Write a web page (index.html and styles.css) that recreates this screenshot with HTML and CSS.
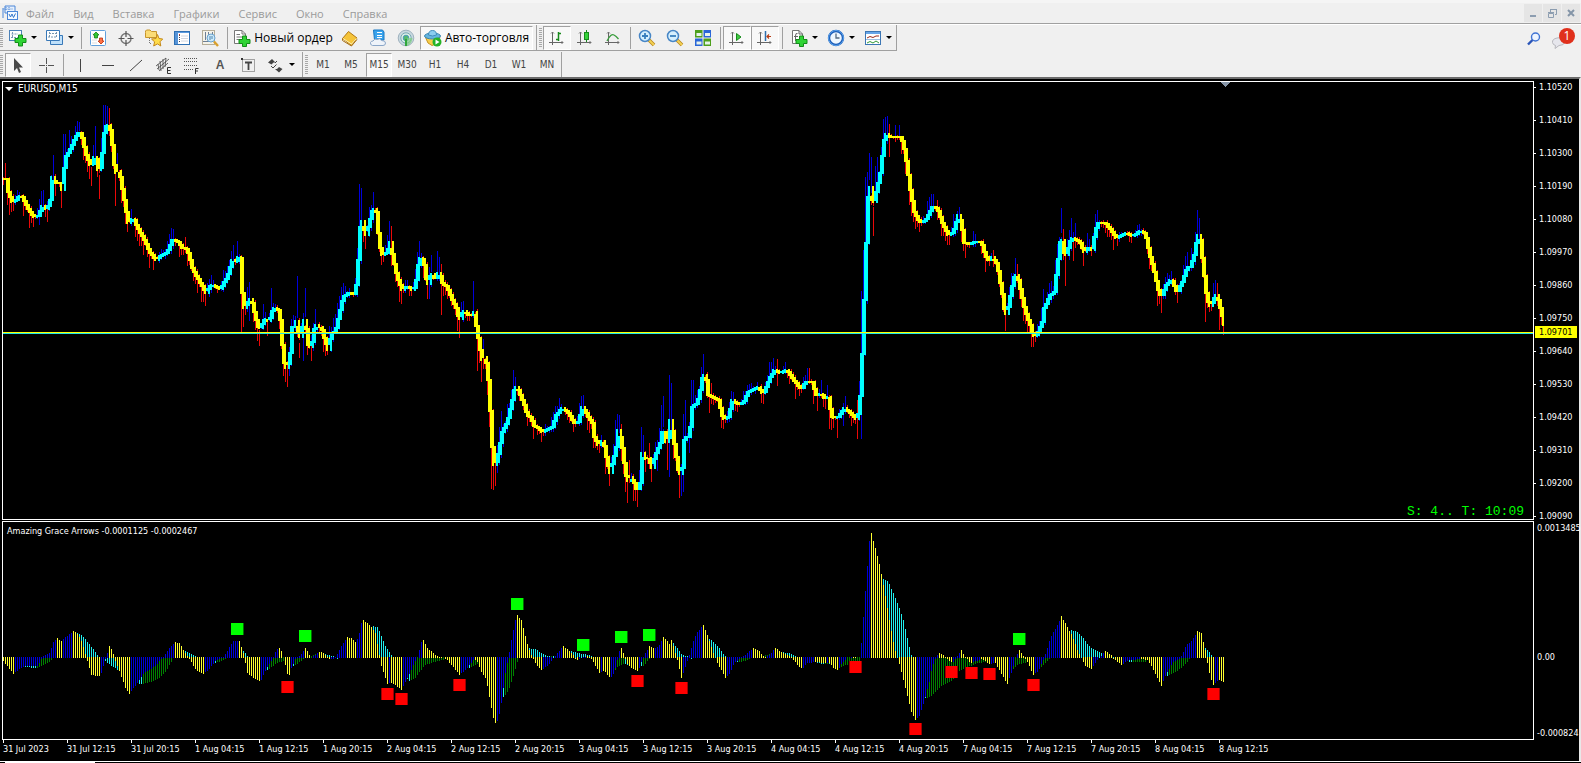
FILE: index.html
```html
<!DOCTYPE html>
<html lang="ru">
<head>
<meta charset="utf-8">
<title>EURUSD,M15</title>
<link rel="stylesheet" href="styles.css">
</head>
<body>
<header class="menubar">
  <svg class="app-icon" viewBox="0 0 16 16"><path d="M1 3V13M3 1V8H13V1Z" fill="#e8f1fc" stroke="#4a86d8"/><path d="M1.500 4H11M4 2V6M7 2V6" stroke="#4a86d8" stroke-dasharray="1 1"/><rect x="5.500" y="6.500" width="10" height="8" fill="#f4f9ff" stroke="#4a86d8"/><path d="M7 9L8.500 12L10 9L11.500 12.500L13.500 8.500" fill="none" stroke="#3377cc"/></svg>
  <nav class="menu">
    <button>Файл</button><button>Вид</button><button>Вставка</button><button>Графики</button><button>Сервис</button><button>Окно</button><button>Справка</button>
  </nav>
  <div class="window-buttons">
    <button aria-label="Свернуть"><svg viewBox="0 0 16 16"><path d="M5 11H11" stroke="#8c9db0" stroke-width="2"/></svg></button>
    <button aria-label="Восстановить"><svg viewBox="0 0 16 16"><path d="M6.500 7V4.500H12.500V9.500H11M6 4.500H13" fill="none" stroke="#8c9db0"/><path d="M4.500 8.500H9.500V12.500H4.500ZM4 7.500H10" fill="none" stroke="#8c9db0"/></svg></button>
    <button aria-label="Закрыть"><svg viewBox="0 0 16 16"><path d="M5 5L11 11M11 5L5 11" stroke="#8495a8" stroke-width="2"/></svg></button>
  </div>
</header>

<div class="toolbar toolbar-main">
  <div class="band">
    <span class="grip"></span>
    <button class="tool drop" aria-label="Новый график"><svg viewBox="0 0 18 18"><rect x=".500" y="1.500" width="12" height="10" fill="#fff" stroke="#4d82b8"/><path d="M3.500 3V9M2 8.500H10M2.500 5H9" stroke="#7a98b5" stroke-dasharray="2 1"/><path d="M9.500 6H13.500V9.500H17V13.500H13.500V17H9.500V13.500H6V9.500H9.500Z" fill="#2fd335" stroke="#128c18"/></svg></button>
    <button class="tool drop" aria-label="Профили"><svg viewBox="0 0 18 18"><path d="M4.500 6.500H16.500V15.500H4.500Z" fill="#bfe0fa" stroke="#3878b8"/><path d="M.500 1.500H13.500V11.500H.500Z" fill="#fff" stroke="#3878b8"/><path d="M3.500 3V9M2 8H11M3 4.500H11M10.500 3V8" stroke="#7796b0" stroke-dasharray="2 1"/></svg></button>
    <span class="sep"></span>
    <button class="tool" aria-label="Обзор рынка"><svg viewBox="0 0 18 18"><rect x="1.500" y="1.500" width="15" height="15" rx="1" fill="#fff" stroke="#60a0dc"/><path d="M3 5H6M3 8H6M3 11H8M3 14H8" stroke="#ddd"/><path d="M7 3L10 6H8.500V9H5.500V6H4Z" fill="#31c732" stroke="#148014" stroke-width=".800"/><path d="M12 15L9 12H10.500V9H13.500V12H15Z" fill="#ff7145" stroke="#b92e0c" stroke-width=".800"/></svg></button>
    <button class="tool" aria-label="Прицел"><svg viewBox="0 0 18 18"><circle cx="9" cy="9.500" r="5" fill="none" stroke="#777" stroke-width="1.400"/><path d="M9 2V8M9 11V17M1.500 9.500H7.500M10.500 9.500H16.500" stroke="#555" stroke-width="1.200"/></svg></button>
    <button class="tool" aria-label="Навигатор"><svg viewBox="0 0 18 18"><path d="M.500 3.500V2L1.500 1H5L6.500 2.500H11.500V8.500H.500Z" fill="#fbdc76" stroke="#c8962c"/><path d="M4.500 9V15M5 14.500H7" stroke="#777" stroke-dasharray="1 1"/><path d="M12.500 5.500L14 9.500L17.700 10L15 12.800L15.800 17L12.500 14.900L8.700 17L9.600 12.800L6.500 10L11 9.500Z" fill="#ffdc4a" stroke="#c4891b"/></svg></button>
    <button class="tool" aria-label="Терминал"><svg viewBox="0 0 18 18"><rect x="1.500" y="2.500" width="15" height="13" fill="#fff" stroke="#2e70b4"/><path d="M2 3.500H16" stroke="#5b9be0"/><rect x="2" y="3" width="3" height="12" fill="#5694d8"/><path d="M8 7H15M8 9.500H15M8 12H15" stroke="#d0d6e0"/><path d="M6.500 6V14" stroke="#445" stroke-dasharray="1 1"/><path d="M6 5.500H7" stroke="#c33"/></svg></button>
    <button class="tool" aria-label="Тестер стратегий"><svg viewBox="0 0 18 18"><rect x="1.500" y="1.500" width="12" height="14" fill="#f5f3ea" stroke="#b6ae98"/><path d="M4.500 3V11M7.500 3V6M11.500 3V6M2 12.500H8" stroke="#6f7f93"/><circle cx="10" cy="9" r="4" fill="#c6e7fb" fill-opacity=".850" stroke="#6aa2ce"/><path d="M9 7V11M11 7V10" stroke="#5085af"/><path d="M13 12.500L17 17" stroke="#d9a02c" stroke-width="2.400"/></svg></button>
    <span class="sep"></span>
    <button class="tool wide"><svg viewBox="0 0 18 18"><path d="M1.500 1.500H9L12.500 5V14.500H1.500Z" fill="#fff" stroke="#777"/><path d="M9 1.500V5H12.500M3.500 5.500H7M3.500 8H10M3.500 10.500H8" fill="none" stroke="#777"/><path d="M9.500 7H13.500V10.500H17V14.500H13.500V17.500H9.500V14.500H6V10.500H9.500Z" fill="#2fd335" stroke="#128c18"/></svg>Новый ордер</button>
    <button class="tool" aria-label="MetaEditor"><svg viewBox="0 0 18 18"><path d="M1.500 9.500L7.500 2.500L16 9L10.500 16.500Z" fill="#f5c43a" stroke="#b17812"/><path d="M2 9.500L10.500 15L15.500 9.500" fill="none" stroke="#fff2b4"/><path d="M1.500 9.500V11.500L10.500 17L16 10.500" fill="none" stroke="#a86e12"/></svg></button>
    <button class="tool" aria-label="VPS"><svg viewBox="0 0 18 18"><path d="M4.500 1H13.500L15 3V11H5.500Z" fill="#39a3ec" stroke="#1978c4"/><path d="M8 3.500H13M8 6.500H13M8 8.500H13" stroke="#fff"/><path d="M3.500 16.500Q1 16 1.500 13.500Q2 12 4 12Q5.500 9 8.500 10.500Q10.500 8.500 12.500 11.500Q16.500 11.500 16.500 14Q16.500 16.500 14 16.500Z" fill="#eef3fa" stroke="#8aa6c8"/></svg></button>
    <button class="tool" aria-label="Сигналы"><svg viewBox="0 0 18 18"><circle cx="9" cy="9" r="7.800" fill="#c9d9e0" stroke="#9fb2bf"/><circle cx="9" cy="9" r="5.200" fill="#dceee5" stroke="#78a9b5"/><circle cx="9" cy="9" r="2.800" fill="#55b96e" stroke="#4c9abb"/><path d="M8 10H10V17H8Z" fill="#30a63b"/><path d="M10 9V17Q15 15 15.500 9" fill="#7fce81" fill-opacity=".700"/></svg></button>
    <button class="tool auto pressed"><svg viewBox="0 0 18 18"><path d="M1.500 8.500L4 14L8 16.500L14 14L16 8Z" fill="#f8ce4c" stroke="#c49322"/><ellipse cx="8.500" cy="7" rx="8" ry="3" fill="#65b5e0" stroke="#3985b0"/><path d="M4.500 6Q4.500 1.500 8.500 1.500T12.500 6Q8.500 8 4.500 6Z" fill="#8bcdf0" stroke="#3f8dbc"/><circle cx="13" cy="13" r="4.500" fill="#25b327"/><path d="M11.500 10.500L15.500 13L11.500 15.500Z" fill="#fff"/></svg>Авто-торговля</button>
    <span class="sep edge"></span>
    <span class="grip"></span>
    <button class="tool pressed" aria-label="Бары"><svg viewBox="0 0 18 18"><use href="#axes"/><path d="M10.500 3V12M8 10.500H10.500M10.500 4.500H13" fill="none" stroke="#188a1c" stroke-width="1.500"/></svg></button>
    <button class="tool" aria-label="Свечи"><svg viewBox="0 0 18 18"><use href="#axes"/><path d="M10.500 1V13" stroke="#188a1c"/><rect x="8.500" y="3.500" width="4" height="7" fill="#35d33a" stroke="#188a1c"/></svg></button>
    <button class="tool" aria-label="Линия"><svg viewBox="0 0 18 18"><use href="#axes"/><path d="M3 12Q7 4 10 6Q12 7 14.500 10" fill="none" stroke="#3a9d3d" stroke-width="1.300"/></svg></button>
    <span class="sep"></span>
    <button class="tool" aria-label="Увеличить"><svg viewBox="0 0 18 18"><path d="M11 11L16 16" stroke="#b5861d" stroke-width="3.600"/><path d="M11 11L16 16" stroke="#f4d153" stroke-width="2"/><circle cx="7" cy="7" r="5.500" fill="#d5effe" stroke="#4786c6" stroke-width="1.500"/><path d="M4 7H10M7 4V10" stroke="#397fbe" stroke-width="1.800"/></svg></button>
    <button class="tool" aria-label="Уменьшить"><svg viewBox="0 0 18 18"><path d="M11 11L16 16" stroke="#b5861d" stroke-width="3.600"/><path d="M11 11L16 16" stroke="#f4d153" stroke-width="2"/><circle cx="7" cy="7" r="5.500" fill="#d5effe" stroke="#4786c6" stroke-width="1.500"/><path d="M4 7H10" stroke="#397fbe" stroke-width="1.800"/></svg></button>
    <button class="tool" aria-label="Окна мозаикой"><svg viewBox="0 0 18 18"><path d="M1 1H8.500V8.500H1ZM9.500 9.500H17V17H9.500Z" fill="#4da01c"/><path d="M9.500 1H17V8.500H9.500ZM1 9.500H8.500V17H1Z" fill="#2a66d8"/><path d="M2.500 4H7.500V7H2.500ZM11 4H16V7H11ZM2.500 12.500H7.500V15.500H2.500ZM11 12.500H16V15.500H11Z" fill="#e8f3ea"/></svg></button>
    <span class="sep"></span>
    <button class="tool pressed" aria-label="Автопрокрутка"><svg viewBox="0 0 18 18"><use href="#axes"/><path d="M8.500 4.500L13 8L8.500 11.500Z" fill="#3fcc42" stroke="#188a1c"/></svg></button>
    <button class="tool pressed" aria-label="Сдвиг графика"><svg viewBox="0 0 18 18"><use href="#axes"/><path d="M9.500 2V12" stroke="#2c6fae" stroke-width="1.500"/><path d="M15 7.500H11M13 5.500L11 7.500L13 9.500" fill="none" stroke="#b73b13" stroke-width="1.200"/></svg></button>
    <span class="sep"></span>
    <button class="tool drop" aria-label="Индикаторы"><svg viewBox="0 0 18 18"><path d="M2.500 1.500H9L12.500 5V14.500H2.500Z" fill="#fff" stroke="#777"/><path d="M9 1.500V5H12.500M7.500 4.500Q5.500 3.500 5.500 7V12M4 7.500H8" fill="none" stroke="#666"/><path d="M9.500 7H13.500V10.500H17V14.500H13.500V17.500H9.500V14.500H6V10.500H9.500Z" fill="#2fd335" stroke="#128c18"/></svg></button>
    <button class="tool drop" aria-label="Периоды"><svg viewBox="0 0 18 18"><circle cx="9" cy="9" r="7" fill="#eef7ff" stroke="#1c5db8" stroke-width="2.400"/><circle cx="9" cy="9" r="7.500" fill="none" stroke="#5da5ee"/><path d="M9 4.500V9H12.500" fill="none" stroke="#566b80" stroke-width="1.300"/></svg></button>
    <button class="tool drop" aria-label="Шаблоны"><svg viewBox="0 0 18 18"><rect x="1.500" y="2.500" width="15" height="13" fill="#fff" stroke="#3c76b4"/><path d="M2 4H16" stroke="#66a5e8" stroke-width="2"/><path d="M3 9L6 7.500L9 8.500L12 7H15" fill="none" stroke="#9a2a1a"/><path d="M2 10.500H16" stroke="#9dbfe2"/><path d="M3 14L6 12.500L9 14L12 12L15 14" fill="none" stroke="#329a37"/></svg></button>
  </div>
  <div class="corner">
    <button class="search" aria-label="Поиск"><svg viewBox="0 0 14 14"><circle cx="8.500" cy="5" r="4" fill="#eef5ff" stroke="#3f73d4" stroke-width="1.400"/><path d="M5.500 8L1 12.500" stroke="#2a55b8" stroke-width="2.400"/></svg></button>
    <button class="messages" aria-label="Сообщения"><svg viewBox="0 0 24 24"><path d="M6 11Q1 12 1.500 15.500Q2 18 4.500 18.500L4 21.500L8 18.500Q13 18.500 14 15V10Z" fill="#e6e6ec" stroke="#b7b7bd"/></svg><span class="badge">1</span></button>
  </div>
</div>

<div class="toolbar toolbar-draw">
  <div class="band">
    <span class="grip"></span>
    <button class="tool pressed" aria-label="Курсор"><svg viewBox="0 0 18 18"><path d="M5 2V15L8 12L10 17L12 16L10 11.500H14Z" fill="#4a4a4a"/></svg></button>
    <button class="tool" aria-label="Перекрестие"><svg viewBox="0 0 18 18"><path d="M9.500 2V8M9.500 11V17M2 9.500H8M11 9.500H17M9 9.500H10" stroke="#555"/></svg></button>
    <span class="sep"></span>
    <button class="tool" aria-label="Вертикальная линия"><svg viewBox="0 0 18 18"><path d="M9.500 3V16" stroke="#444"/></svg></button>
    <button class="tool" aria-label="Горизонтальная линия"><svg viewBox="0 0 18 18"><path d="M3 9.500H15" stroke="#444"/></svg></button>
    <button class="tool" aria-label="Трендовая линия"><svg viewBox="0 0 18 18"><path d="M3 15L15 4" stroke="#444"/></svg></button>
    <button class="tool" aria-label="Канал"><svg viewBox="0 0 18 18"><path d="M2 13L14 3M1 10L11 2M4 15L13 7M5 5L6 15M8 3L8 13M11 2L10 11M3 8L4 14" stroke="#444" stroke-width=".800"/><path d="M16 11.500H12.500V17.500H16M12.500 14.500H15.500" fill="none" stroke="#333"/></svg></button>
    <button class="tool" aria-label="Фибоначчи"><svg viewBox="0 0 18 18"><path d="M1 2.500H15M1 5.500H15M1 9.500H15M1 13.500H11" stroke="#555" stroke-dasharray="1 1"/><path d="M15.500 12.500H12.500V18M12.500 15H15" fill="none" stroke="#333"/></svg></button>
    <button class="tool letter" aria-label="Текст">A</button>
    <button class="tool" aria-label="Метка"><svg viewBox="0 0 18 18"><rect x="3.500" y="3.500" width="12" height="12" fill="none" stroke="#555" stroke-dasharray="1 1"/><path d="M2 3H4" stroke="#333" stroke-width="2"/><path d="M6 6.500H13M9.500 6V14" stroke="#444" stroke-width="1.800"/></svg></button>
    <button class="tool drop" aria-label="Стрелки"><svg viewBox="0 0 18 18"><path d="M5 3L8.500 6.500H6.500L4.500 8.500L1 6.500Z" fill="#444"/><path d="M10 5L8 7M4 10L6 12L9.500 8.500" fill="none" stroke="#444"/><path d="M8 13H10L12 11L15.500 13L12 16.500Z" fill="#444"/></svg></button>
    <span class="sep edge"></span>
    <span class="grip"></span>
    <button class="tool period">M1</button><button class="tool period">M5</button><button class="tool period pressed">M15</button><button class="tool period">M30</button><button class="tool period">H1</button><button class="tool period">H4</button><button class="tool period">D1</button><button class="tool period">W1</button><button class="tool period">MN</button>
  </div>
</div>

<svg class="defs" aria-hidden="true"><defs><g id="axes"><path d="M4.500 3V16M1 13.500H15" stroke="#666"/><path d="M3 4.500L4.500 3L6 4.500M13.500 12L15 13.500L13.500 15" fill="none" stroke="#777"/></g></defs></svg>

<main class="chart">
  <section class="pane price-pane">
    <div class="plot">
      <svg class="drawing" id="price"></svg>
      <div class="title symbol">EURUSD,M15</div>
      <div class="countdown">S: 4.. T: 10:09</div>
    </div>
    <div class="axis">
      <ol class="price-scale" id="scale"></ol>
      <span class="current">1.09701</span>
    </div>
  </section>
  <section class="pane indicator-pane">
    <div class="plot">
      <svg class="drawing" id="histogram"></svg>
      <div class="title">Amazing Grace Arrows -0.0001125 -0.0002467</div>
    </div>
    <div class="axis indicator-scale"><span>0.0013485</span><i class="above"></i><span>0.00</span><i class="below"></i><span>-0.000824</span></div>
  </section>
  <ol class="time-scale" id="times"></ol>
</main>
<footer class="tabs"><span></span></footer>
<script src="chart.js"></script>
</body>
</html>
```
FILE: styles.css
```css
* { box-sizing: border-box; }
body {
  margin: 0;
  min-height: 100vh;
  display: flex;
  flex-direction: column;
  background: #f0f0f0;
  font-family: "DejaVu Sans Condensed", "DejaVu Sans", sans-serif;
  font-size: 9px;
  overflow: hidden;
}
button { border: 0; padding: 0; margin: 0; background: none; color: inherit; font: inherit; }
ol { list-style: none; margin: 0; padding: 0; }
svg { display: block; }
.defs { position: absolute; width: 0; height: 0; }

.menubar {
  display: flex;
  align-items: center;
  height: 24px;
  border-top: 3px solid #f5f5f5;
  border-bottom: 1px solid #a0a0a0;
  padding-left: 2px;
}
.app-icon { width: 16px; height: 16px; }
.menu { display: flex; gap: 19px; padding-left: 8px; color: #9a9a9a; font: 11px "Open Sans", sans-serif; }
.window-buttons { display: flex; gap: 1px; margin-left: auto; padding-right: 1px; }
.window-buttons button { width: 18px; height: 18px; background: #e5e5e5; display: grid; place-items: center; }
.window-buttons svg { width: 16px; height: 16px; }

.toolbar { display: flex; justify-content: space-between; }
.band { display: flex; align-items: center; border-right: 1px solid #a0a0a0; }
.toolbar-main { height: 28px; border-top: 1px solid #fff; }
.toolbar-main .band { height: 26px; border-bottom: 1px solid #a0a0a0; }
.toolbar-draw { height: 25px; }
.grip { width: 3px; height: 20px; margin-right: 1px; background: repeating-linear-gradient(#a8a8a8 0 1px, #f0f0f0 1px 2px); }
.sep { width: 6px; height: 22px; display: flex; justify-content: center; }
.sep::before { content: ""; width: 1px; background: #a0a0a0; }
.sep.edge { height: 100%; }
.tool { width: 28px; height: 24px; display: flex; align-items: center; justify-content: center; }
.tool svg { width: 18px; height: 18px; flex: none; }
.drop { width: 37px; justify-content: flex-start; gap: 4px; padding-left: 5px; }
.drop::after { content: ""; border: 3px solid transparent; border-top-color: #000; border-bottom: 0; }
.wide { width: 106px; gap: 3px; font: 12px "Open Sans", sans-serif; color: #000; }
.auto { width: 113px; gap: 3px; font: 12px "Open Sans", sans-serif; color: #000; }
.pressed { background: #f8f8f8; border: 1px solid #fff; border-top-color: #a0a0a0; border-left-color: #a0a0a0; background-clip: padding-box; }
.letter { font: bold 12px "Liberation Sans", sans-serif; color: #555; }
.period { font-size: 10px; color: #444; }
.toolbar-draw .pressed { width: 26px; margin: 0 1px; }
.corner { display: flex; align-items: center; gap: 10px; padding-right: 6px; }
.search svg { width: 14px; height: 14px; }
.messages { position: relative; width: 24px; height: 24px; }
.messages svg { width: 24px; height: 24px; }
.badge {
  position: absolute; top: 1px; right: 0;
  width: 16px; height: 16px; border-radius: 8px;
  background: #e0301c; color: #fff;
  font: 12px/16px "Open Sans", sans-serif; text-align: center;
}

.chart {
  flex: 1;
  display: flex;
  flex-direction: column;
  background: #000;
  color: #fff;
  border-top: 2px solid #6b6b6b;
  border-right: 2px solid #e8e8e8;
  padding: 2px 0 0 2px;
  line-height: 12px;
}
.pane { display: flex; min-height: 0; }
.price-pane { flex: 439 1 0; margin-bottom: 1px; }
.indicator-pane { flex: 219 1 0; }
.plot { flex: 1; min-width: 0; position: relative; border: 1px solid #fff; }
.drawing { position: absolute; inset: 0; width: 100%; height: 100%; shape-rendering: crispEdges; }
.title { position: relative; padding: 3px 4px; }
.symbol { display: flex; align-items: center; gap: 5px; padding-left: 2px; padding-top: 1px; font-size: 10px; }
.symbol::before { content: ""; border: 4px solid transparent; border-top-color: #fff; border-bottom: 0; }
.countdown { position: absolute; right: 9px; bottom: 0; color: #0f0; font: 13px "Liberation Mono", monospace; white-space: pre; }
.axis { width: 45px; position: relative; }
.price-scale { height: calc(100% + 2px); display: flex; flex-direction: column; justify-content: space-between; }
.price-scale li, .indicator-scale span { display: flex; align-items: center; height: 12px; white-space: nowrap; }
.price-scale li { gap: 3px; }
.price-scale li::before { content: ""; width: 2px; height: 1px; background: #fff; }
.current { position: absolute; top: 56%; left: 1px; right: 2px; margin-top: -1px; background: #ff0; color: #000; padding-left: 4px; }
.indicator-scale { display: flex; flex-direction: column; padding: 1px 0 1px 1px; }
.indicator-scale span { padding-left: 2px; }
.above { flex: 117; }
.below { flex: 64; }
.time-scale { display: flex; height: 21px; padding-left: 1px; overflow: hidden; }
.time-scale li { flex: none; width: 64px; white-space: nowrap; }
.time-scale li::before { content: ""; display: block; width: 1px; height: 3px; background: #fff; }
.tabs { height: 2px; background: #000; border-top: 1px solid #fff; }
.tabs span { display: block; width: 90px; height: 1px; margin-left: 5px; background: #fff; }
```
FILE: chart.js
```js
const NS = 'http://www.w3.org/2000/svg';
const pairs = s => s.trim().split(/\s+/).map(p => p.split(',').map(Number));

/* Averaged price curve, "x,y". */
const curve = pairs(`3,179 6,179 8,192 12,202 15,201 19,195 22,197 27,207 33,217 36,216 37,218 42,206 44,208 47,209 50,200 52,177 55,183 60,183 62,190 65,157 67,155 71,147 75,137 79,131 82,138 86,155 91,167 95,153 99,175 102,153 104,133 107,123 110,130 113,153 115,177 117,168 120,177 124,200 128,223 133,218 137,227 143,238 150,253 156,260 160,256 167,253 172,240 177,241 182,248 187,249 192,268 200,283 206,293 211,284 215,286 220,289 227,277 232,260 235,263 238,257 240,258 243,310 247,303 251,298 255,317 259,330 265,318 269,322 273,307 279,310 281,330 283,360 287,370 290,353 292,327 294,327 297,318 299,343 301,330 305,317 307,340 309,350 312,342 315,323 318,328 321,326 324,338 328,350 331,333 335,332 340,310 343,297 348,293 354,294 357,280 359,240 361,213 363,228 366,235 369,223 373,207 376,212 378,233 381,255 387,252 390,242 393,260 397,277
402,290 407,286 412,290 415,287 419,257 423,260 425,270 427,288 431,272 435,280 439,270 441,282 447,287 453,302 457,310 459,322 463,310 468,315 472,315 473,303 475,320 480,350 482,360 485,355 488,380 491,427 493,467 495,463 497,460 500,443 502,432 507,422 511,405 515,385 519,392 524,405 527,415 531,417 533,425 537,427 542,432 547,430 552,427 556,415 562,408 568,413 574,423 578,422 582,407 587,415 592,423 594,437 598,445 603,440 607,462 610,473 613,460 616,447 618,430 621,440 624,463 627,483 630,477 634,483 637,492 640,483 642,453 645,460 648,458 652,468 655,455 660,443 663,427 665,437 667,447 670,420 673,437 676,457 679,477 682,468 684,440 686,437 689,437 692,407 697,403 700,390 703,372 706,380 708,395 713,397 718,400 723,420 728,417 732,400 737,404 743,403 748,392 758,387 763,395 770,377 774,370 779,373 787,370 795,382 800,388
802,388 805,382 812,382 816,395 821,394 824,398 828,397 831,415 833,418 838,417 844,408 850,413 856,419 859,412 861,380 863,327 865,273 867,213 869,180 871,193 873,207 875,197 880,173 883,147 885,133 889,137 893,137 900,137 903,143 907,167 910,190 914,212 919,222 925,221 932,207 937,208 942,223 948,235 953,233 958,215 961,223 964,243 970,244 975,242 981,242 985,255 989,261 992,257 997,265 1000,283 1003,300 1005,317 1008,307 1011,290 1015,273 1018,280 1023,303 1027,317 1030,325 1033,337 1037,334 1042,322 1044,308 1050,295 1054,292 1057,267 1059,250 1061,233 1063,247 1065,258 1068,248 1071,237 1079,241 1084,252 1089,247 1092,250 1094,237 1097,223 1105,223 1110,229 1116,238 1125,233 1132,236 1140,231 1145,233 1149,253 1154,272 1158,290 1161,298 1166,285 1171,279 1177,293 1182,282 1187,267 1190,267 1195,252 1197,233 1200,240 1203,267 1206,293 1209,307 1213,302 1215,293 1218,300 1221,312 1224,325`);

/* Long shadows, "x,y of the far end". */
const blueShadows = pairs(`39,225 43,190 53,155 63,134 65,134 69,130 79,122 95,126 103,105 105,105 107,106 117,153 171,233 211,275 233,245 237,241 249,282 249,321 271,288 289,376 297,276 305,288 303,361 315,309 341,287 359,184 361,188 373,192 389,221 419,241 429,299 431,255 437,251 439,257 473,281 483,339 497,473 501,411 513,370 515,377 581,396 583,395 615,420 617,414 619,415 641,427 643,435 657,471 661,405 663,396 669,375 669,477 671,383 681,496 683,492 683,414 685,400 689,453 691,380 693,380 703,354 733,392 769,366 773,358 785,362 807,368 821,380 827,385 845,396 843,426 861,439 859,381 861,291 863,250 865,177 867,172 869,153 871,157 875,166 877,157 883,119 885,117 887,116 895,125 899,125 933,194 953,214 959,207 973,231 1015,258 1043,289 1051,281 1061,208 1071,218 1075,223 1069,260 1087,233 1097,212 1171,271 1197,210 1199,218 1215,281`);
const redShadows = pairs(`5,163 9,215 33,227 47,222 61,208 91,186 99,199 109,108 115,206 127,232 137,241 185,237 203,302 241,332 243,327 259,346 267,336 287,387 283,376 299,358 311,361 365,248 391,226 381,265 399,302 427,299 441,315 441,264 459,338 477,371 481,382 491,489 493,490 495,486 533,439 573,432 599,453 605,474 609,486 621,424 627,503 633,501 637,507 629,460 649,443 651,479 667,470 679,498 709,413 711,383 723,429 763,404 777,359 777,386 809,368 817,411 825,409 829,429 837,438 851,426 857,439 857,400 873,236 889,157 889,124 919,232 937,200 965,258 993,250 1005,331 1017,264 1033,347 1063,229 1065,286 1073,261 1083,266 1117,246 1161,313 1177,303 1205,322 1217,283 1219,330 1223,335`);

/* Histogram values in pixels above the zero line: fast and slow series. */
const fast = pairs(`3,-3 13,-16 22,-9 25,-8 37,-8 40,-3 42,1 49,5 53,16 57,20 61,17 65,21 73,27 76,25 80,20 84,8 86,0 91,-17 98,-18 100,-18 102,-12 105,-1 109,12 112,7 115,-3 118,-10 125,-30 129,-36 134,-29 144,-15 155,-8 162,0 168,9 175,16 179,15 186,3 190,-2 196,-13 203,-16 209,-11 215,-3 222,0 228,9 233,17 239,17 243,5 247,-15 252,-19 260,-24 264,-15 268,-7 272,-1 276,8 280,11 283,0 285,-7 288,-20 291,-10 295,-1 300,3 305,10 311,0 320,7 325,3 329,-1 334,-1 340,10 347,21 351,20 355,16 358,20 361,35 363,38 370,32 375,25 378,8 381,-8 387,-26 390,-24 395,-27 401,-32 405,-24 410,-14 414,-4 417,0 419,8 421,16 423,18 427,10 434,4 440,1 446,-1 452,-8 459,-17 466,-11 474,-1 477,-4 480,-12 486,-22 490,-45 493,-60 495,-65 498,-62 501,-45 505,-15 508,0 511,18 515,38 517,43 521,38 527,14 531,3 536,-7 541,-12 549,-6 553,0 557,5 563,12 567,9 573,3 577,-2 582,1 588,2 592,-2 599,-15 604,-13 610,-20 614,-14 617,-2 619,7 621,10 624,3 626,-5 632,-11 638,-13 641,-4 644,3 649,12 654,9 659,13 663,21 667,17 669,14 671,18 674,9 677,-2 681,-20 684,-12 688,0 692,14 696,25 703,33 708,20 712,8 716,-3 725,-20 729,-16 734,-5 740,0 746,4 753,10 758,8 764,1 770,4 775,10 783,5 791,1 797,-7 802,-11 807,-5 815,-4 825,-5 830,-5 834,-11 838,-12 840,-7 847,0 853,1 859,0 861,15 865,67 869,117 871,125 875,110 880,90 885,62 889,38 893,16 896,3 899,-6 905,-30 911,-54 915,-62 919,-58 923,-46 929,-24 932,-8 936,2 939,5 943,3 947,-1 952,-5 956,0 961,8 965,1 970,-5 976,-3 982,-1 989,-6 995,-5 1000,-14 1007,-26 1012,-12 1015,0 1019,8 1023,2 1027,-4 1033,-17 1038,-13 1043,-2 1046,7 1050,20 1057,33 1061,42 1066,33 1072,22 1077,8 1081,0 1085,-8 1091,-11 1096,-3 1100,1 1105,7 1111,3 1115,-2 1121,-7 1128,-2 1132,-2 1141,-1 1147,-2 1152,-10 1161,-28 1166,-16 1172,-5 1180,0 1186,13 1192,18 1197,27 1201,25 1205,8 1207,-5 1210,-20 1213,-27 1217,-23 1220,-22 1224,-24`);
const slow = pairs(`3,0 25,-9 36,-10 42,-7 50,-3 53,0 76,25 80,24 85,19 92,10 98,2 100,0 136,-25 142,-26 150,-24 160,-19 166,-13 173,0 184,8 190,5 196,1 198,0 214,-5 222,-3 226,0 240,9 244,6 247,2 250,0 267,-12 275,-6 280,-4 284,-3 286,0 292,-9 302,-2 304,0 322,6 326,3 334,2 338,0 372,32 377,31 380,25 385,12 390,4 393,0 408,-23 414,-21 420,-13 425,-7 434,-4 445,-1 455,-1 457,0 469,-10 475,-7 485,0 503,-39 508,-33 513,-18 517,-4 519,0 527,10 535,9 541,5 548,2 553,2 557,0 563,9 573,6 583,4 590,3 594,0 612,-15 618,-8 624,-6 630,-8 634,0 642,-9 648,-2 651,0 672,16 677,10 682,3 688,2 692,0 706,22 712,17 718,11 724,3 727,0 737,-4 745,-3 752,0 780,6 788,5 795,2 797,0 823,-6 830,-6 840,-9 846,-7 860,-3 861,0 880,79 884,79 888,76 893,65 899,50 903,38 907,20 910,6 912,0 925,-40 930,-39 940,-29 952,-22 960,-12 970,-8 978,-5 990,-3 996,0 1012,-12 1018,-6 1025,-5 1030,0 1040,-10 1048,-2 1050,0 1070,28 1076,27 1082,21 1088,13 1094,8 1102,5 1110,3 1115,0 1130,-4 1145,-4 1150,0 1167,-18 1176,-14 1184,-7 1190,0 1204,11 1209,6 1213,1 1215,0 1224,0`);
const buys = pairs('231,623 299,630 511,598 577,639 615,631 643,629 1013,633');
const sells = pairs('281,681 381,688 395,693 453,679 631,675 675,682 849,661 909,723 945,666 965,667 983,668 1027,679 1207,688');

function at(points, x) {
  if (x <= points[0][0]) return points[0][1];
  for (let i = 1; i < points.length; i++) {
    const [x1, y1] = points[i], [x0, y0] = points[i - 1];
    if (x <= x1) return y0 + (y1 - y0) * (x - x0) / (x1 - x0);
  }
  return points[points.length - 1][1];
}
function group(svg, dx, dy) {
  const g = document.createElementNS(NS, 'g');
  g.setAttribute('transform', `translate(${-dx} ${-dy})`);
  svg.append(g);
  return g;
}
function rect(parent, x, y, width, height, fill) {
  const r = document.createElementNS(NS, 'rect');
  Object.entries({ x, y, width, height, fill }).forEach(([k, v]) => r.setAttribute(k, v));
  parent.append(r);
}
const bar = (g, x, a, b, w, fill) => {
  const top = Math.round(Math.min(a, b));
  rect(g, x, top, w, Math.max(1, Math.round(Math.max(a, b)) - top), fill);
};
const noise = n => { const v = Math.sin(n * 12.9898) * 43758.5453; return v - Math.floor(v); };

const price = document.getElementById('price');
const shadows = group(price, 3, 82);
const bodies = group(price, 3, 82);
for (let x = 3; x < 1225; x += 2) {
  const a = at(curve, x - 3), b = at(curve, x + 1);
  const up = b < a;
  const lo = Math.max(a, b), hi = Math.min(a, b);
  const reach = 4 + Math.min(6, Math.abs(b - a));
  bar(shadows, x, hi - noise(x) * (up ? reach * 1.6 : 3), lo + noise(x + 7) * (up ? 4 : reach * 1.6), 1, up ? '#0000dc' : '#eb0808');
  bar(bodies, x - 1, hi - 1, lo + 1, 2, up ? '#00ffff' : '#ffff00');
}
blueShadows.forEach(([x, y]) => bar(shadows, x, at(curve, x), y, 1, '#0000dc'));
redShadows.forEach(([x, y]) => bar(shadows, x, at(curve, x), y, 1, '#eb0808'));
rect(price, 0, 250, '100%', 1, '#ffff00');
rect(price, 0, 251, '100%', 1, '#20e8e8');
const shift = document.createElementNS(NS, 'path');
shift.setAttribute('d', 'M1218 0h9l-4.500 5z');
shift.setAttribute('fill', '#8796a8');
price.append(shift);

const histogram = document.getElementById('histogram');
const bars = group(histogram, 3, 522);
const ZERO = 658;
for (let x = 3; x < 1225; x += 2) {
  for (const [series, rise, fall] of [[slow, '#008000', '#20f0f0'], [fast, '#0000d8', '#ffff30']]) {
    const v = at(series, x);
    if (Math.abs(v) < 0.4) continue;
    const rising = v >= at(series, x - 2) && at(series, x + 2) >= v;
    bar(bars, x, v > 0 ? ZERO : ZERO - 1, ZERO - v, 1, rising ? rise : fall);
  }
}
const mark = (x, y, edge, fill) => { rect(bars, x, y, 13, 12, edge); rect(bars, x + (edge === '#a00000' ? 1 : 0), y, edge === '#a00000' ? 11 : 12, 12, fill); };
buys.forEach(([x, y]) => mark(x, y, '#007000', '#00ff00'));
sells.forEach(([x, y]) => mark(x, y, '#a00000', '#ff0000'));

const fill = (id, items) => items.forEach(text => {
  const li = document.createElement('li');
  li.textContent = text;
  document.getElementById(id).append(li);
});
fill('scale', Array.from({ length: 14 }, (_, i) => (1.1052 - i * 0.0011).toFixed(5)));
const times = ['31 Jul 2023', '31 Jul 12:15', '31 Jul 20:15'];
for (const day of [1, 2, 3, 4, 7]) for (const hour of ['04:15', '12:15', '20:15']) times.push(`${day} Aug ${hour}`);
times.push('8 Aug 04:15', '8 Aug 12:15');
fill('times', times);
```
